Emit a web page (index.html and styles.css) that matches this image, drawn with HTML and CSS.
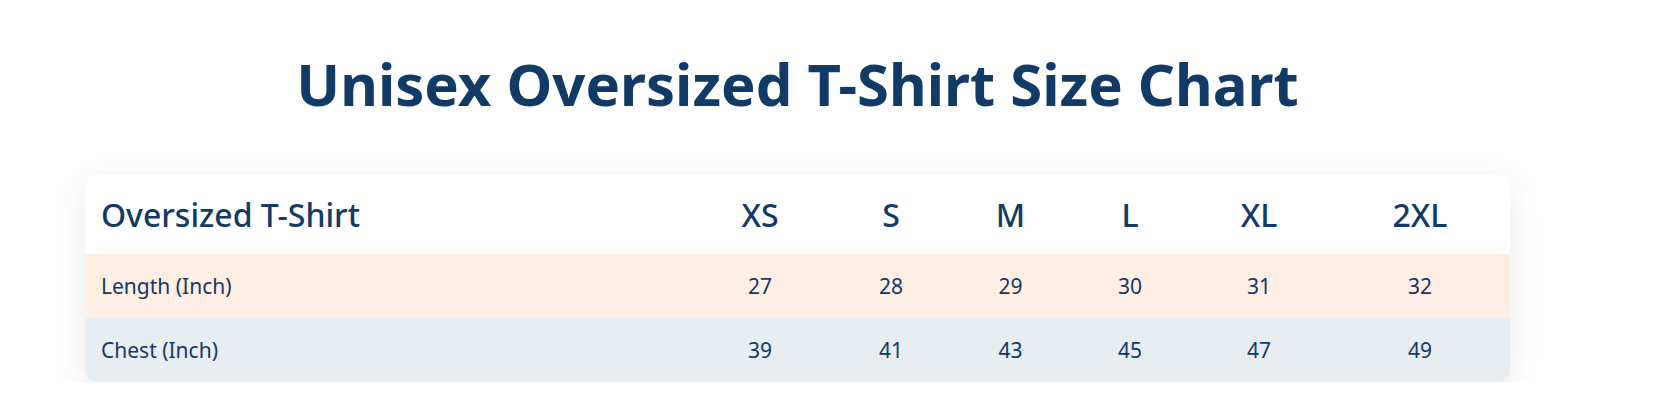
FILE: index.html
```html
<!DOCTYPE html>
<html lang="en">
<head>
<meta charset="utf-8">
<title>Unisex Oversized T-Shirt Size Chart</title>
<link rel="stylesheet" href="styles.css">
</head>
<body>
<main class="page">
  <h1 class="title">Unisex Oversized T-Shirt Size Chart</h1>
  <div class="card">
    <div class="row head">
      <div class="cell label">Oversized T-Shirt</div>
      <div class="cell">XS</div>
      <div class="cell">S</div>
      <div class="cell">M</div>
      <div class="cell">L</div>
      <div class="cell">XL</div>
      <div class="cell">2XL</div>
    </div>
    <div class="row length">
      <div class="cell label">Length (Inch)</div>
      <div class="cell">27</div>
      <div class="cell">28</div>
      <div class="cell">29</div>
      <div class="cell">30</div>
      <div class="cell">31</div>
      <div class="cell">32</div>
    </div>
    <div class="row chest">
      <div class="cell label">Chest (Inch)</div>
      <div class="cell">39</div>
      <div class="cell">41</div>
      <div class="cell">43</div>
      <div class="cell">45</div>
      <div class="cell">47</div>
      <div class="cell">49</div>
    </div>
  </div>
</main>
</body>
</html>
```
FILE: styles.css
```css
html, body {
  margin: 0;
  padding: 0;
  background: #ffffff;
}
body {
  font-family: "Noto Sans", "Open Sans", sans-serif;
  color: #123a66;
}
.page {
  width: 1425px;
  margin-left: 85px;
  padding-top: 44px;
}
.title {
  margin: 0 0 51px;
  text-align: center;
  font-size: 58px;
  font-weight: 700;
  line-height: 80px;
  color: #123a66;
}
.card {
  background: #ffffff;
  border-radius: 12px;
  overflow: hidden;
  box-shadow: 0 8px 36px rgba(0, 0, 0, 0.09);
}
.row {
  display: grid;
  grid-template-columns: 602px 146px 116px 123px 116px 142px 180px;
  align-items: center;
}
.cell {
  text-align: center;
}
.cell.label {
  text-align: left;
  padding-left: 16px;
}
.head {
  height: 79px;
  font-size: 32px;
  font-weight: 500;
}
.length, .chest {
  height: 64px;
  font-size: 21px;
}
.length {
  background: #feeee3;
}
.chest {
  background: #e8edf2;
}
```
